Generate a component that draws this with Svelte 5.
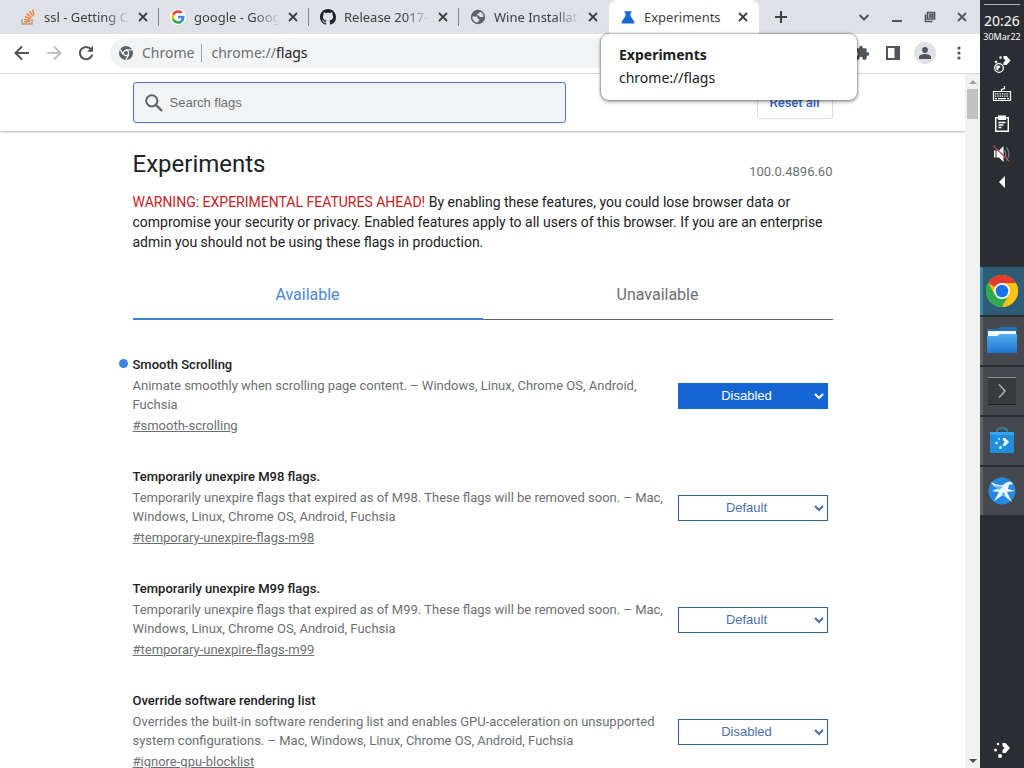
<script lang="ts">
  let search = $state('');
  let selectedTab = $state('available');

  const browserTabs = [
    { icon: 'stack', title: 'ssl - Getting Chrome' },
    { icon: 'google', title: 'google - Google Search' },
    { icon: 'github', title: 'Release 2017-12' },
    { icon: 'globe', title: 'Wine Installation' },
    { icon: 'flask', title: 'Experiments', active: true },
  ];

  let flags = $state([
    {
      name: 'Smooth Scrolling',
      description: 'Animate smoothly when scrolling page content.',
      platforms: 'Windows, Linux, Chrome OS, Android, Fuchsia',
      id: 'smooth-scrolling',
      value: 'Disabled',
      changed: true,
    },
    {
      name: 'Temporarily unexpire M98 flags.',
      description: 'Temporarily unexpire flags that expired as of M98. These flags will be removed soon.',
      platforms: 'Mac, Windows, Linux, Chrome OS, Android, Fuchsia',
      id: 'temporary-unexpire-flags-m98',
      value: 'Default',
      changed: false,
    },
    {
      name: 'Temporarily unexpire M99 flags.',
      description: 'Temporarily unexpire flags that expired as of M99. These flags will be removed soon.',
      platforms: 'Mac, Windows, Linux, Chrome OS, Android, Fuchsia',
      id: 'temporary-unexpire-flags-m99',
      value: 'Default',
      changed: false,
    },
    {
      name: 'Override software rendering list',
      description: 'Overrides the built-in software rendering list and enables GPU-acceleration on unsupported system configurations.',
      platforms: 'Mac, Windows, Linux, Chrome OS, Android, Fuchsia',
      id: 'ignore-gpu-blocklist',
      value: 'Disabled',
      changed: false,
    },
  ]);
</script>

{#snippet favicon(name)}
  {#if name === 'stack'}
    <svg class="favicon" viewBox="0 0 16 16" fill="none">
      <path d="M2 10v5h10v-5" stroke="#b39a86" stroke-width="1.4" />
      <path d="M4 12.8h6M4.1 10.4l6 .9M5 7.6l5.6 2.3M6.8 4.6l4.6 4M9.4 2.2l3.4 5M12.6.6l1.4 5.6" stroke="#ee8236" stroke-width="1.4" />
    </svg>
  {:else if name === 'google'}
    <svg class="favicon" viewBox="0 0 48 48">
      <circle cx="24" cy="24" r="24" fill="#fff" />
      <path fill="#ea4335" d="M24 11.5c3.500 0 6.200 1.300 8.300 3.100l5.600-5.500C34.500 5.800 29.700 4 24 4 16.200 4 9.400 8.500 6.100 15l6.500 5C14.200 15.100 18.700 11.500 24 11.500z" />
      <path fill="#fbbc05" d="M12.600 28.100a12.400 12.400 0 0 1 0-8.200L6.100 15a20 20 0 0 0 0 18z" />
      <path fill="#4285f4" d="M43.500 24.500c0-1.600-.1-2.800-.4-4.100H24v7.700h11c-.5 2.700-2 4.800-4.400 6.400l6.300 4.900c4.100-3.700 6.600-8.800 6.600-14.900z" />
      <path fill="#34a853" d="M12.600 28.100 6.100 33C9.400 39.600 16.200 44 24 44c5.400 0 9.900-1.700 12.900-4.600l-6.300-4.900c-1.700 1.200-3.900 2-6.600 2-5.300 0-9.800-3.500-11.400-8.400z" />
    </svg>
  {:else if name === 'github'}
    <svg class="favicon" viewBox="0 0 16 16" fill="#1f2328">
      <path d="M8 0C3.580 0 0 3.580 0 8c0 3.540 2.290 6.530 5.470 7.590.4.070.55-.17.55-.38 0-.19-.01-.82-.01-1.490-2.010.37-2.530-.49-2.690-.94-.09-.23-.48-.94-.82-1.130-.28-.15-.68-.52-.01-.53.630-.01 1.080.58 1.230.82.72 1.210 1.870.87 2.330.66.07-.52.28-.87.51-1.070-1.780-.2-3.640-.89-3.640-3.950 0-.87.310-1.590.82-2.150-.08-.2-.36-1.020.08-2.120 0 0 .67-.21 2.200.82.640-.18 1.320-.27 2-.27s1.360.09 2 .27c1.530-1.040 2.200-.82 2.200-.82.440 1.100.16 1.920.08 2.120.51.56.82 1.270.82 2.150 0 3.070-1.870 3.750-3.650 3.950.29.25.54.73.54 1.480 0 1.070-.01 1.930-.01 2.200 0 .21.15.46.55.38A8.010 8.010 0 0 0 16 8c0-4.420-3.580-8-8-8z" />
    </svg>
  {:else if name === 'globe'}
    <svg class="favicon" viewBox="0 0 16 16">
      <circle cx="8" cy="8" r="7.200" fill="#5f6368" />
      <path fill="#dee1e6" d="M2.300 7.500h3.900q1.600 0 1.600 1.600v1h1.400v1.600q-1.300.3-1.300 1.900-3.600.1-5.200-3.300-.5-1.400-.4-2.800zM9.800 2.700q3.500 1 3.900 4.800-1.300.9-3 .4-1.600 0-1.600-1.500H7q0-2.200 2.200-2.200z" />
    </svg>
  {:else}
    <svg class="favicon" viewBox="0 0 16 16" fill="#1967d2">
      <path d="M4.500 2.200h7v1.500h-1V7l3.800 5.800c.6 1 .1 1.700-.9 1.700H2.600c-1 0-1.500-.7-.9-1.700L5.500 7V3.700h-1z" />
    </svg>
  {/if}
{/snippet}

{#snippet cross()}
  <svg width="10" height="10" viewBox="0 0 10 10" stroke="currentColor" stroke-width="1.800"><path d="M1 1l8 8M9 1L1 9" /></svg>
{/snippet}

<div class="desktop">
  <div class="browser">
    <div class="tab-strip">
      {#each browserTabs as tab}
        <div class="tab" class:active={tab.active}>
          {@render favicon(tab.icon)}
          <span class="tab-title">{tab.title}</span>
          <button class="plain tab-close" aria-label="Close tab">{@render cross()}</button>
          {#if tab.active}
            <div class="tooltip" role="tooltip">
              <strong>Experiments</strong>
              <span>chrome://flags</span>
            </div>
          {/if}
        </div>
      {/each}
      <button class="plain new-tab" aria-label="New tab">
        <svg width="12" height="12" viewBox="0 0 12 12" stroke="currentColor" stroke-width="2"><path d="M6 0v12M0 6h12" /></svg>
      </button>
      <div class="window-buttons">
        <button class="plain" aria-label="Search tabs">
          <svg width="12" height="12" viewBox="0 0 12 12" fill="none" stroke="currentColor" stroke-width="2"><path d="M1.500 4 6 8.500 10.500 4" /></svg>
        </button>
        <button class="plain" aria-label="Minimize">
          <svg width="12" height="12" viewBox="0 0 12 12" stroke="currentColor" stroke-width="2"><path d="M1 10h10" /></svg>
        </button>
        <button class="plain" aria-label="Restore">
          <svg width="12" height="12" viewBox="0 0 12 12" fill="none" stroke="currentColor" stroke-width="1.700"><path d="M3.500 1.500h7v6.500h-7zM1.500 3.500v7h7M6 3.500h2.500v2.500H6z" /></svg>
        </button>
        <button class="plain" aria-label="Close">{@render cross()}</button>
      </div>
    </div>

    <div class="toolbar">
      <button class="plain nav" aria-label="Back">
        <svg width="16" height="16" viewBox="0 0 16 16" fill="none" stroke="#50555a" stroke-width="2"><path d="M15 8H2M8 1.500 1.500 8 8 14.500" /></svg>
      </button>
      <button class="plain nav" aria-label="Forward" disabled>
        <svg width="16" height="16" viewBox="0 0 16 16" fill="none" stroke="#bdc1c6" stroke-width="2"><path d="M1 8h13M8 1.500 14.500 8 8 14.500" /></svg>
      </button>
      <button class="plain nav" aria-label="Reload">
        <svg width="16" height="16" viewBox="0 0 16 16" fill="none" stroke="#50555a" stroke-width="2"><path d="M13 4.200A6.200 6.200 0 1 0 14.200 9.500" /><path d="M15 .8v6H9z" fill="#50555a" stroke="none" /></svg>
      </button>
      <div class="address">
        <svg width="14" height="14" viewBox="0 0 14 14">
          <circle cx="7" cy="7" r="7" fill="#5f6368" />
          <circle cx="7" cy="7" r="2.600" fill="#5f6368" stroke="#f1f3f4" stroke-width="1.200" />
          <path d="M7 3.800h6.200M4.200 8.600 1.200 3.400M9.800 8.600l-3 5.200" stroke="#f1f3f4" stroke-width="1.200" />
        </svg>
        <span class="scheme">Chrome</span>
        <span class="url">chrome://<b>flags</b></span>
      </div>
      <div class="actions">
        <button class="plain" aria-label="Extensions">
          <svg width="16" height="16" viewBox="0 0 24 24" fill="#50555a"><path d="M20.500 11H19V7c0-1.100-.9-2-2-2h-4V3.500a2.500 2.500 0 0 0-5 0V5H4c-1.100 0-2 .9-2 2v3.800h1.500a2.700 2.700 0 0 1 0 5.400H2V20c0 1.100.9 2 2 2h3.800v-1.500a2.700 2.700 0 0 1 5.400 0V22H17c1.100 0 2-.9 2-2v-4h1.500a2.500 2.500 0 0 0 0-5z" /></svg>
        </button>
        <button class="plain" aria-label="Side panel">
          <svg width="14" height="14" viewBox="0 0 14 14"><path fill="#50555a" fill-rule="evenodd" d="M0 0h14v14H0zM2 2v10h6.500V2z" /></svg>
        </button>
        <button class="plain avatar" aria-label="Profile">
          <svg width="12" height="12" viewBox="0 0 12 12" fill="#50555a"><circle cx="6" cy="3" r="2.900" /><path d="M0 12V10c0-2 3-3 6-3s6 1 6 3v2z" /></svg>
        </button>
        <button class="plain" aria-label="Menu">
          <svg width="4" height="14" viewBox="0 0 4 14" fill="#50555a"><circle cx="2" cy="2" r="1.600" /><circle cx="2" cy="7" r="1.600" /><circle cx="2" cy="12" r="1.600" /></svg>
        </button>
      </div>
    </div>

    <div class="viewport">
      <div class="page">
        <header>
          <div class="header-row">
            <label class="search">
              <svg width="18" height="18" viewBox="0 0 18 18" fill="none" stroke="#5f6368"><circle cx="6.800" cy="6.800" r="5.600" stroke-width="2" /><path d="M11 11l6 6" stroke-width="2.400" /></svg>
              <input type="text" placeholder="Search flags" aria-label="Search flags" bind:value={search} />
            </label>
            <button class="reset">Reset all</button>
          </div>
        </header>

        <main>
          <div class="title-row">
            <h1>Experiments</h1>
            <span class="version">100.0.4896.60</span>
          </div>
          <p class="blurb">
            <span class="warning">WARNING: EXPERIMENTAL FEATURES AHEAD!</span> By enabling these features, you could lose browser data or compromise your security or privacy. Enabled features apply to all users of this browser. If you are an enterprise admin you should not be using these flags in production.
          </p>
          <div class="tabs" role="tablist">
            <button role="tab" class:selected={selectedTab === 'available'} aria-selected={selectedTab === 'available'} onclick={() => (selectedTab = 'available')}>Available</button>
            <button role="tab" class:selected={selectedTab === 'unavailable'} aria-selected={selectedTab === 'unavailable'} onclick={() => (selectedTab = 'unavailable')}>Unavailable</button>
          </div>

          {#each flags as flag}
            <section class="flag">
              <div class="flag-text">
                <h2 class:changed={flag.changed} id="{flag.id}-name">{flag.name}</h2>
                <p>{flag.description} – {flag.platforms}</p>
                <a href="#{flag.id}">#{flag.id}</a>
              </div>
              <select class:changed={flag.changed} aria-labelledby="{flag.id}-name" bind:value={flag.value}>
                <option>Default</option>
                <option>Enabled</option>
                <option>Disabled</option>
              </select>
            </section>
          {/each}
        </main>
      </div>
      <div class="scrollbar">
        <svg width="8" height="4" viewBox="0 0 8 4" fill="#a3a3a3"><path d="M0 4h8L4 0z" /></svg>
        <div class="thumb"></div>
        <svg class="down" width="8" height="4" viewBox="0 0 8 4" fill="#505050"><path d="M0 0h8L4 4z" /></svg>
      </div>
    </div>
  </div>

  <aside class="panel">
    <div class="clock">
      <span class="time">20:26</span>
      <span class="date">30Mar22</span>
    </div>
    <div class="tray">
      <button class="plain" aria-label="Network">
        <svg width="20" height="20" viewBox="0 0 20 20" fill="#fff"><circle cx="7" cy="14" r="4.300" fill="none" stroke="#fff" stroke-width="1.300" /><path d="M4.500 11.500l3 .2 1 1.600-2 1-.3 2.600-2-2zM11.500 2h3l4 4.500-4 4.500h-3V8.500l2-2-2-2z" /><circle cx="8.500" cy="3.500" r="1.200" /><circle cx="4" cy="8" r="1.300" /></svg>
      </button>
      <button class="plain" aria-label="Keyboard">
        <svg width="20" height="20" viewBox="0 0 20 20" fill="none" stroke="#fff"><path d="M1.500 7.500h17v9h-17zM9.500 7.500V5.500l3-1V2" stroke-width="1.200" /><path d="M3 9.800h14M3 12.200h14" stroke-width="1.300" stroke-dasharray="1.300 1" /><path d="M3 14.600h2M6 14.600h8M15 14.600h2" stroke-width="1.300" /></svg>
      </button>
      <button class="plain" aria-label="Clipboard">
        <svg width="20" height="20" viewBox="0 0 20 20" fill="none" stroke="#fff" stroke-width="1.400"><path d="M3.700 3.700h12.600v13.600H3.700z" /><path d="M6 1.500h8V6H6z" fill="#fff" stroke="none" /><path d="M6.500 8.500h7M6.500 11h5M6.500 13.500h3" /></svg>
      </button>
      <button class="plain" aria-label="Volume muted">
        <svg width="20" height="20" viewBox="0 0 20 20" fill="none"><path d="M2 6.500h1.500v7H2zM4.500 6.500H7L11.500 2v16L7 13.500H4.500z" fill="#fff" /><path d="M12.500 6.500q2.500 3.500 0 7M14.500 3.500q5 6.500 0 13" stroke="#747a7e" stroke-width="1.300" /><path d="M1 1.500l16.500 16" stroke="#b8434c" stroke-width="1.200" /></svg>
      </button>
      <button class="plain" aria-label="Show hidden icons">
        <svg width="20" height="16" viewBox="0 2 20 16" fill="#fff"><path d="M13 4v12L7 10z" /></svg>
      </button>
    </div>
    <div class="tasks">
      <button class="plain current" aria-label="Chrome">
        <svg width="32" height="32" viewBox="0 0 32 32">
          <circle cx="16" cy="16" r="16" fill="#fbc116" />
          <path d="M16 16 2.140 8A16 16 0 0 1 29.860 8z" fill="#e33b2e" />
          <path d="M2.140 8A16 16 0 0 0 16 32l6.900-12L16 16 9.100 20z" fill="#2da94f" />
          <path d="M16 8h13.860A16 16 0 0 1 16 32l6.900-12z" fill="#fbc116" />
          <circle cx="16" cy="16" r="8" fill="#fff" /><circle cx="16" cy="16" r="6.300" fill="#1a73e8" />
        </svg>
      </button>
      <button class="plain" aria-label="Files">
        <svg width="32" height="32" viewBox="0 0 32 32"><defs><linearGradient id="folder" x2="0" y2="1"><stop stop-color="#53adf0" /><stop offset="1" stop-color="#2274cf" /></linearGradient></defs><path d="M1 4h10l3-2h17v10H1z" fill="#2270ae" /><path d="M2 6h28v8H2z" fill="#f5f8fa" /><path d="M1 11h10l3-2h17v19H1z" fill="url(#folder)" /></svg>
      </button>
      <button class="plain" aria-label="Terminal">
        <svg width="32" height="32" viewBox="0 0 32 32" fill="none"><path d="M2 2h28v28H2z" fill="#363c3e" /><path d="M2 2.500h28" stroke="#8b9294" /><path d="M2 29.500h28" stroke="#1b2022" /><path d="M13 9.500l6 6.500-6 6.500" stroke="#a9aeaf" stroke-width="1.600" /></svg>
      </button>
      <button class="plain" aria-label="Software centre">
        <svg width="32" height="32" viewBox="0 0 32 32" fill="none"><path d="M11 9V6q0-3 5-3t5 3v3" stroke="#347a9d" stroke-width="2" /><path d="M4 7h24v20q0 1-1 1H5q-1 0-1-1z" fill="#218edb" /><path d="M4 7h24v3H4z" fill="#36a4e8" /><path d="M17 13h2l4 4-4 4h-2v-2l2-2-2-2z" fill="#fff" /><g fill="#c4eeff"><circle cx="13" cy="14" r="1" /><circle cx="10.500" cy="18" r="1.300" /><circle cx="14.500" cy="22.500" r="1.500" /></g></svg>
      </button>
      <button class="plain" aria-label="Falkon">
        <svg width="32" height="32" viewBox="0 0 32 32"><circle cx="16" cy="16" r="13.500" fill="#2688df" /><path d="M5 7q8 4 12 3 4-4 8-3l2 2-4 1-1 4 7 2-8 1 5 10-9-7-9 6 5-9-7-1 7-3q-6-1-8-6z" fill="#eaf7ff" /><path d="M9 10l8 2-4 3zM15 19l3-2 2 5z" fill="#69baf1" /></svg>
      </button>
    </div>
    <button class="plain launcher" aria-label="Application launcher">
      <svg width="20" height="20" viewBox="0 0 20 20" fill="#fff"><path d="M10.500 4h3l4.500 5-4.500 5h-3v-3l2-2-2-2z" /><circle cx="6" cy="5" r="1.200" /><circle cx="3.500" cy="11" r="1.500" /><circle cx="8" cy="17" r="2" /></svg>
    </button>
  </aside>
</div>

<style>
  :global(body) {
    background: #fff;
  }

  .desktop {
    display: flex;
    height: 100vh;
    overflow: hidden;
    font-family: "Noto Sans", sans-serif;
    color: #3c4043;
  }

  .browser {
    flex: 1;
    min-width: 0;
    display: flex;
    flex-direction: column;
  }

  svg {
    display: block;
    flex: none;
  }

  .plain {
    display: flex;
    align-items: center;
    justify-content: center;
    border: 0;
    padding: 0;
    background: none;
    color: inherit;
  }

  /* tab strip */
  .tab-strip {
    display: flex;
    height: 34px;
    flex: none;
    padding-left: 9px;
    background: #dee1e6;
  }

  .tab {
    position: relative;
    flex: 0 1 150px;
    min-width: 0;
    box-sizing: border-box;
    display: flex;
    align-items: center;
    gap: 8px;
    padding: 0 10px 0 11px;
    font-size: 13px;
  }

  .tab:not(.active)::after {
    content: "";
    position: absolute;
    right: 0;
    top: 8px;
    width: 1px;
    height: 18px;
    background: #80868b;
  }

  .tab:nth-child(4)::after {
    display: none;
  }

  .tab.active {
    background: #fff;
    border-radius: 8px 8px 0 0;
  }

  .favicon {
    width: 16px;
    height: 16px;
  }

  .tab-title {
    flex: 1;
    min-width: 0;
    overflow: hidden;
    white-space: nowrap;
    mask-image: linear-gradient(to left, transparent, #000 24px);
  }

  .active .tab-title {
    mask-image: none;
    overflow: visible;
  }

  .tab-close {
    width: 12px;
    height: 16px;
  }

  .tooltip {
    position: absolute;
    z-index: 2;
    top: 34px;
    left: -8px;
    width: 256px;
    box-sizing: border-box;
    display: flex;
    flex-direction: column;
    padding: 9px 18px 11px;
    border-radius: 8px;
    background: #fff;
    box-shadow: 0 0 2px 1px rgba(0, 0, 0, 0.3), 0 2px 4px rgba(0, 0, 0, 0.3);
    font-size: 14px;
    line-height: 23px;
    color: #202124;
  }

  .new-tab {
    width: 44px;
  }

  .window-buttons {
    display: flex;
    gap: 21px;
    margin-left: auto;
    padding-right: 13px;
    color: #50555a;
  }

  /* toolbar */
  .toolbar {
    display: flex;
    align-items: center;
    height: 40px;
    flex: none;
    box-sizing: border-box;
    padding: 0 14px 1px;
    border-bottom: 1px solid #d4d6d9;
    background: #fff;
  }

  .nav {
    width: 16px;
    margin-right: 16px;
  }

  .address {
    flex: 1;
    display: flex;
    align-items: center;
    height: 30px;
    box-sizing: border-box;
    margin-right: 28px;
    padding: 0 9px 1px;
    border-radius: 15px;
    background: #f1f3f4;
    font-size: 14px;
    line-height: 18px;
    color: #6b6f73;
  }

  .scheme {
    margin-left: 9px;
    padding-right: 7px;
    border-right: 1px solid #9aa0a6;
  }

  .url {
    padding-left: 9px;
  }

  .url b {
    font-weight: 400;
    color: #202124;
  }

  .actions {
    display: flex;
    align-items: center;
    gap: 16px;
  }

  .avatar {
    width: 22px;
    height: 22px;
    margin: 0 0 0 -2px;
    border-radius: 50%;
    background: #dee1e6;
  }

  .actions button:last-child {
    width: 14px;
  }

  /* flags page */
  .viewport {
    flex: 1;
    min-height: 0;
    display: flex;
    font-family: Roboto, sans-serif;
  }

  .page {
    flex: 1;
    min-width: 0;
    overflow: hidden;
  }

  header {
    padding: 8px 16px;
    box-shadow: 0 1px 2px rgba(0, 0, 0, 0.3);
  }

  .header-row,
  main {
    max-width: 700px;
    margin: 0 auto;
  }

  .header-row {
    display: flex;
    align-items: center;
    justify-content: space-between;
  }

  .search {
    flex: 0 1 433px;
    box-sizing: border-box;
    height: 41px;
    display: flex;
    align-items: center;
    gap: 7px;
    padding: 0 11px;
    border: 1px solid #4a78c8;
    border-radius: 3px;
    background: #f1f3f4;
  }

  .search input {
    flex: 1;
    min-width: 0;
    padding: 0;
    border: 0;
    outline: 0;
    background: none;
    font: 13px "Liberation Sans", Arial, sans-serif;
    color: #202124;
  }

  .search input::placeholder {
    color: #6b6f73;
  }

  .reset {
    width: 76px;
    height: 32px;
    padding: 0;
    border: 1px solid #dadce0;
    border-radius: 3px;
    background: #fff;
    font: 500 13px Roboto, sans-serif;
    color: #3367c6;
  }

  main {
    padding: 16px 16px 0;
  }

  .title-row {
    display: flex;
    align-items: flex-end;
    justify-content: space-between;
  }

  h1 {
    margin: 0;
    font-size: 24px;
    font-weight: 400;
    line-height: 34px;
    color: #202124;
  }

  .version {
    font-size: 13px;
    line-height: 18px;
    color: #6b6f73;
  }

  .blurb {
    margin: 11px 0 18px;
    font-size: 14px;
    line-height: 20px;
    color: #202124;
  }

  .warning {
    color: #c5221f;
  }

  .tabs {
    display: flex;
  }

  .tabs button {
    flex: 1;
    height: 50px;
    padding: 0;
    border: 0;
    border-bottom: 1px solid #5f6368;
    background: none;
    font: 16px Roboto, sans-serif;
    color: #6b6f73;
  }

  .tabs .selected {
    border-bottom: 2px solid #3b82d9;
    color: #4a86d8;
  }

  .flag {
    display: flex;
    align-items: center;
    gap: 14px;
    padding-right: 5px;
    margin: 35px 0 31px;
  }

  .flag + .flag {
    margin-top: 0;
  }

  .flag-text {
    flex: 1;
    min-width: 0;
    font-size: 13px;
    color: #6b6f73;
  }

  h2 {
    position: relative;
    margin: 0 0 1px;
    font-size: 13px;
    font-weight: 500;
    line-height: 20px;
    color: #202124;
  }

  h2.changed::before {
    content: "";
    position: absolute;
    left: -14px;
    top: 4px;
    width: 9px;
    height: 9px;
    border-radius: 50%;
    background: #3d84e6;
  }

  .flag-text p {
    margin: 0 0 2px;
    line-height: 19px;
  }

  .flag-text a {
    display: block;
    line-height: 20px;
    color: #6b6f73;
  }

  select {
    width: 150px;
    height: 26px;
    border: 1px solid #2f5f9e;
    border-radius: 0;
    background: #fff;
    font: 13px "Liberation Sans", Arial, sans-serif;
    text-align-last: center;
    color: #4a70ac;
  }

  select.changed {
    border-color: #1566d4;
    background: #1566d4;
    color: #fff;
  }

  .scrollbar {
    display: flex;
    flex-direction: column;
    align-items: center;
    gap: 5px;
    width: 15px;
    box-sizing: border-box;
    padding: 6px 1px 5px;
    background: #f1f1f1;
  }

  .thumb {
    width: 11px;
    height: 30px;
    background: #c1c1c1;
  }

  .down {
    margin-top: auto;
  }

  /* desktop panel */
  .panel {
    width: 44px;
    flex: none;
    display: flex;
    flex-direction: column;
    background: #2a2e32;
    color: #fcfcfc;
  }

  .clock {
    display: flex;
    flex-direction: column;
    align-items: center;
    margin: 4px 4px 0;
    padding-top: 7px;
    border-top: 1px solid #b5b8ba;
  }

  .time {
    font-size: 14px;
    line-height: 18px;
  }

  .date {
    font-size: 9px;
    line-height: 14px;
  }

  .tray {
    display: flex;
    flex-direction: column;
    align-items: center;
    gap: 10px;
    margin-top: 10px;
  }

  .tasks {
    display: flex;
    flex-direction: column;
    gap: 2px;
    margin-top: 77px;
  }

  .tasks button {
    height: 48px;
    border-left: 3px solid #5e6366;
    padding-right: 3px;
    background: #45494d;
  }

  .tasks .current {
    border-left-color: #3a86a8;
    background: #2d5c74;
  }

  .launcher {
    margin: auto auto 9px;
  }
</style>
